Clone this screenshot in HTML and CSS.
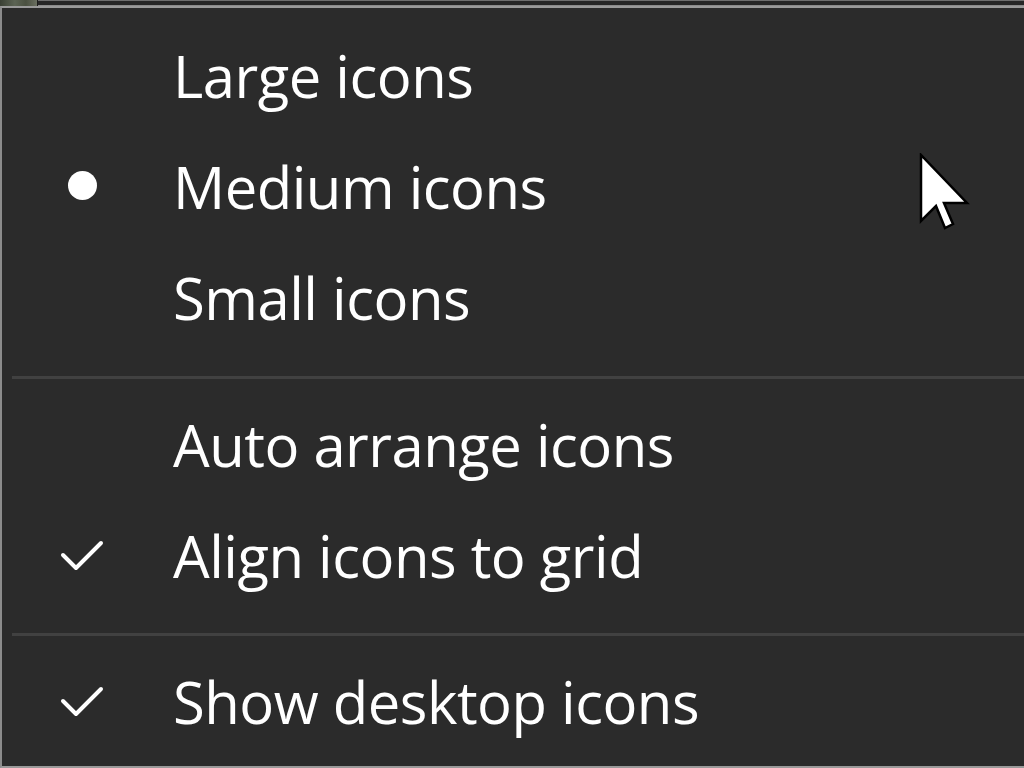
FILE: index.html
```html
<!DOCTYPE html>
<html lang="en">
<head>
<meta charset="utf-8">
<title>Desktop context menu - View</title>
<link rel="stylesheet" href="styles.css">
</head>
<body>
<div class="screen">
  <div class="top-strip">
    <div class="thumb"></div>
    <div class="bar"></div>
  </div>
  <div class="menu">
    <div class="group first">
      <div class="item"><span class="mark"></span><span class="label">Large icons</span></div>
      <div class="item"><span class="mark"><span class="bullet"></span></span><span class="label">Medium icons</span></div>
      <div class="item"><span class="mark"></span><span class="label">Small icons</span></div>
    </div>
    <div class="separator"></div>
    <div class="group">
      <div class="item"><span class="mark"></span><span class="label">Auto arrange icons</span></div>
      <div class="item"><span class="mark"><svg class="check" width="44" height="32" viewBox="0 0 44 32"><path d="M3 15 L16 28 L41 3" fill="none" stroke="#ffffff" stroke-width="4" stroke-linecap="round" stroke-linejoin="round"/></svg></span><span class="label">Align icons to grid</span></div>
    </div>
    <div class="separator second"></div>
    <div class="group">
      <div class="item"><span class="mark"><svg class="check" width="44" height="32" viewBox="0 0 44 32"><path d="M3 15 L16 28 L41 3" fill="none" stroke="#ffffff" stroke-width="4" stroke-linecap="round" stroke-linejoin="round"/></svg></span><span class="label">Show desktop icons</span></div>
    </div>
    <svg class="cursor" width="52" height="80" viewBox="0 0 52 80">
      <path d="M2 2 L2 68 L17 53 L26 75 L34 71 L25 50 L48 50 Z" fill="#ffffff" stroke="#000000" stroke-width="2.5" stroke-linejoin="miter"/>
    </svg>
  </div>
</div>
</body>
</html>
```
FILE: styles.css
```css
html, body {
  margin: 0;
  padding: 0;
  background: #2b2b2b;
}

.screen {
  width: 1024px;
  height: 768px;
  overflow: hidden;
  display: flex;
  flex-direction: column;
  font-family: "Open Sans", "Noto Sans", sans-serif;
}

.top-strip {
  height: 6px;
  display: flex;
  background: #1c1c1c;
}

.thumb {
  width: 37px;
  background: linear-gradient(90deg, #3a4034 0%, #5c6454 40%, #4a5040 70%, #6a6f60 100%);
}

.bar {
  flex: 1;
  margin-left: 1px;
  border-top: 1px solid #6e6e6e;
  border-bottom: 1px solid #8a8a8a;
  background: #262626;
  box-sizing: border-box;
}

.menu {
  position: relative;
  flex: 1;
  background: #2b2b2b;
  border-top: 2px solid #9a9a9a;
  border-left: 2px solid #8c8c8c;
  border-bottom: 2px solid #9a9a9a;
  padding-top: 12px;
  box-sizing: border-box;
}

.group {
  display: flex;
  flex-direction: column;
}

.item {
  height: 111px;
  display: flex;
  align-items: center;
  color: #ffffff;
}

.mark {
  width: 171px;
  flex: none;
  display: flex;
  justify-content: flex-start;
  align-items: center;
  height: 100%;
}

.label {
  font-size: 58px;
  line-height: 111px;
  letter-spacing: -0.5px;
  white-space: nowrap;
}

.bullet {
  width: 29px;
  height: 29px;
  border-radius: 50%;
  background: #ffffff;
  margin-left: 66px;
  margin-top: -3px;
}

.check {
  margin-left: 58px;
  margin-top: 0;
}

.separator {
  height: 3px;
  background: #414141;
  margin: 23px 0 10px 10px;
}

.separator.second {
  margin-top: 22px;
}

.cursor {
  position: absolute;
  left: 917px;
  top: 145px;
}
```
